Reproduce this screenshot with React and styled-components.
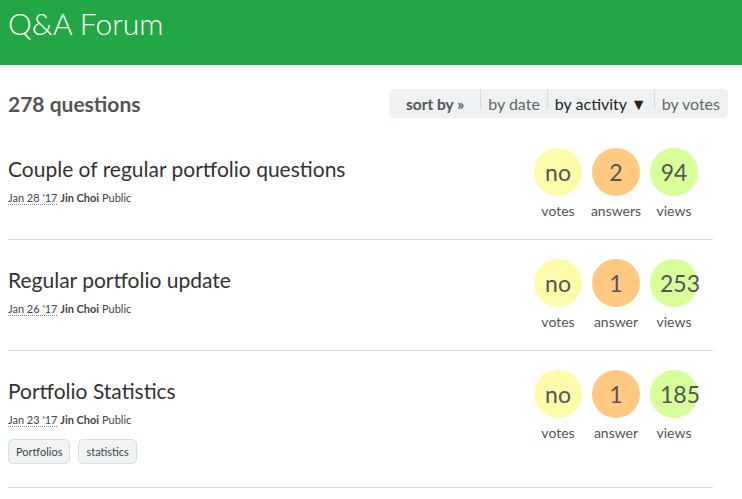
import React from 'react';
import styled, { createGlobalStyle } from 'styled-components';

const GlobalStyle = createGlobalStyle`
  body {
    margin: 0;
    background: #fff;
    font-family: Lato, "Open Sans", sans-serif;
    color: #555;
  }
`;

const questions = [
  { id: 1, title: 'Couple of regular portfolio questions', date: "Jan 28 '17", author: 'Jin Choi', votes: 'no', answers: 2, views: 94, tags: [] },
  { id: 2, title: 'Regular portfolio update', date: "Jan 26 '17", author: 'Jin Choi', votes: 'no', answers: 1, views: 253, tags: [] },
  { id: 3, title: 'Portfolio Statistics', date: "Jan 23 '17", author: 'Jin Choi', votes: 'no', answers: 1, views: 185, tags: ['Portfolios', 'statistics'] },
];

const App = () => {
  return (
    <>
      <GlobalStyle />
      <Header>
        <HeaderTitle>Q&amp;A Forum</HeaderTitle>
      </Header>
      <Main>
        <ListHead>
          <Count>278 questions</Count>
          <SortBar>
            <SortLabel>sort by »</SortLabel>
            <Sep />
            <SortOption>by date</SortOption>
            <Sep />
            <SortOption active>by activity ▼</SortOption>
            <Sep />
            <SortOption>by votes</SortOption>
          </SortBar>
        </ListHead>
        <List>
          {questions.map((q) => (
            <Row key={q.id}>
              <Info>
                <Title>{q.title}</Title>
                <Meta>
                  <DateText>{q.date}</DateText> <Author>{q.author}</Author> Public
                </Meta>
                {q.tags.length > 0 && (
                  <Tags>
                    {q.tags.map((t) => (
                      <Tag key={t}>{t}</Tag>
                    ))}
                  </Tags>
                )}
              </Info>
              <Stats>
                <Stat>
                  <Bubble color="#fffbaa">{q.votes}</Bubble>
                  <StatLabel>votes</StatLabel>
                </Stat>
                <Stat>
                  <Bubble color="#ffc982">{q.answers}</Bubble>
                  <StatLabel>{q.answers === 1 ? 'answer' : 'answers'}</StatLabel>
                </Stat>
                <Stat>
                  <Bubble color="#d6ff9a">{q.views}</Bubble>
                  <StatLabel>views</StatLabel>
                </Stat>
              </Stats>
            </Row>
          ))}
        </List>
      </Main>
    </>
  );
};

const Header = styled.header`
  background: #22a744;
  height: 65px;
  padding: 0 8px;
  box-sizing: border-box;
`;

const HeaderTitle = styled.h1`
  margin: 0;
  padding-top: 5px;
  font-family: Lato, sans-serif;
  font-weight: 300;
  font-size: 30px;
  line-height: 36px;
  color: #fff;
`;

const Main = styled.main`
  padding: 0 14px 0 8px;
`;

const ListHead = styled.div`
  display: flex;
  justify-content: space-between;
  align-items: center;
  padding-top: 24px;
`;

const Count = styled.h2`
  margin: 0;
  font-size: 21px;
  font-weight: 700;
  color: #555;
`;

const SortBar = styled.div`
  display: flex;
  align-items: center;
  height: 29px;
  padding: 0 1px 0 17px;
  background: #eef2f3;
  border-radius: 5px;
  font-size: 16px;
`;

const SortLabel = styled.span`
  font-weight: 700;
  font-size: 15.5px;
  color: #555;
  margin-right: 16px;
`;

const Sep = styled.span`
  align-self: flex-start;
  width: 1px;
  height: 20px;
  background: #d5dde0;
`;

const SortOption = styled.span`
  padding: 0 7px;
  color: ${(p) => (p.active ? '#222' : '#666')};
`;

const List = styled.div`
  margin-top: 11px;
  margin-right: 15px;
`;

const Row = styled.div`
  display: flex;
  justify-content: space-between;
  padding: 19px 15px 20px 0;
  border-bottom: 1px solid #deddcf;
`;

const Info = styled.div`
  padding-top: 9px;
`;

const Title = styled.h3`
  margin: 0;
  font-size: 21px;
  line-height: 24px;
  font-weight: 400;
  color: #333;
`;

const Meta = styled.div`
  margin-top: 10px;
  font-size: 11px;
  line-height: 14px;
  color: #444;
`;

const DateText = styled.span`
  border-bottom: 1px dotted #888;
`;

const Author = styled.b`
  font-weight: 700;
`;

const Tags = styled.div`
  display: flex;
  gap: 8px;
  margin-top: 12px;
  margin-bottom: 3px;
`;

const Tag = styled.span`
  display: inline-flex;
  align-items: center;
  height: 25px;
  padding: 0 7px;
  box-sizing: border-box;
  background: #f0f4f5;
  border: 1px solid #d6dfe1;
  border-radius: 5px;
  font-size: 11px;
  color: #444;
`;

const Stats = styled.div`
  display: flex;
  gap: 10px;
  align-items: flex-start;
`;

const Stat = styled.div`
  display: flex;
  flex-direction: column;
  align-items: center;
  width: 48px;
`;

const Bubble = styled.div`
  width: 48px;
  height: 48px;
  box-sizing: border-box;
  padding: 0 10px;
  border-radius: 50%;
  background: ${(p) => p.color};
  text-align: center;
  white-space: nowrap;
  font-size: 23px;
  line-height: 48px;
  color: #555;
`;

const StatLabel = styled.div`
  margin-top: 7px;
  font-size: 14px;
  line-height: 16px;
  color: #555;
  white-space: nowrap;
`;

export default App;
